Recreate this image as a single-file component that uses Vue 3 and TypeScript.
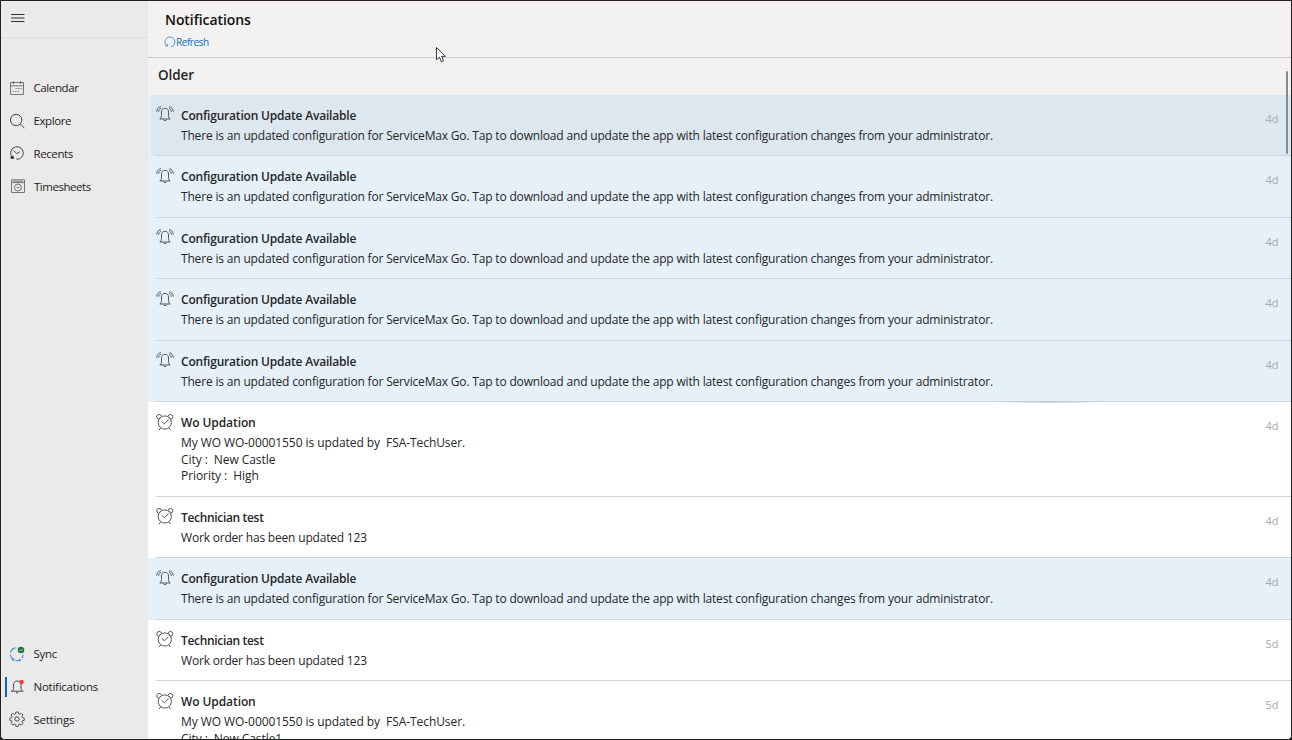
<script setup lang="ts">
interface Note {
  kind: 'bell' | 'alarm'
  variant: 'config' | 'technician' | 'order'
  title: string
  lines: string[]
  age: string
  hovered?: boolean
}

const config = (hovered = false): Note => ({
  kind: 'bell',
  variant: 'config',
  title: 'Configuration Update Available',
  lines: [
    'There is an updated configuration for ServiceMax Go. Tap to download and update the app with latest configuration changes from your administrator.',
  ],
  age: '4d',
  hovered,
})
const technician = (age: string): Note => ({
  kind: 'alarm',
  variant: 'technician',
  title: 'Technician test',
  lines: ['Work order has been updated 123'],
  age,
})
const workOrder = (lines: string[], age: string): Note => ({
  kind: 'alarm',
  variant: 'order',
  title: 'Wo Updation',
  lines: ['My WO WO-00001550 is updated by  FSA-TechUser.', ...lines],
  age,
})

const notes: Note[] = [
  config(true),
  config(),
  config(),
  config(),
  config(),
  workOrder(['City :  New Castle', 'Priority :  High'], '4d'),
  technician('4d'),
  config(),
  technician('5d'),
  workOrder(['City :  New Castle1'], '5d'),
]
</script>

<template>
  <div class="window">
    <aside class="sidebar">
      <div class="menu">
        <svg width="14" height="10" viewBox="0 0 14 10"><path d="M0 1.500h13.500M0 5h13.500M0 8.500h13.500" stroke="#333" stroke-width="1.2" /></svg>
      </div>
      <nav class="top-nav">
        <a class="item">
          <svg class="icon" viewBox="0 0 16 16"><path d="M1.500 2.500h13v12h-13zM1.500 5.800h13M4.500 1v3M11.500 1v3" /><path d="M6.500 8.500h1.300M9 8.500h1.300M11.500 8.500h1.300M3.500 11.500h1.300M6 11.500h1.300M8.700 11.500H10" /></svg>
          <span class="tight">Calendar</span>
        </a>
        <a class="item">
          <svg class="icon dark" viewBox="0 0 16 16"><circle cx="7.200" cy="7" r="5.700" /><path d="M11.400 11.200l4 4" /></svg>
          <span class="tight">Explore</span>
        </a>
        <a class="item">
          <svg class="icon dark" viewBox="0 0 16 16"><path d="M2.200 10.500A6.300 6.300 0 1 1 7.500 14.300M4.400 5.400L7.800 8.600 10.800 6.800" /><path d="M2 11.300h2.300v2.200H2z" fill="#222" /></svg>
          <span class="tight">Recents</span>
        </a>
        <a class="item">
          <svg class="icon shifted" viewBox="0 0 16 16"><path d="M1.500 1.800h13v12.700h-13zM1.500 4.600h13M3 3.200h10" /><circle cx="8" cy="9.500" r="3.500" /><path d="M6.500 9l1.500 1.200 1.700-1.500" /></svg>
          <span class="tightest">Timesheets</span>
        </a>
      </nav>
      <nav class="bottom-nav">
        <a class="item">
          <svg class="icon" viewBox="0 0 16 16">
            <g stroke="#3d8bd0" stroke-width="1.100"><path d="M1.500 6.500A6.500 6.500 0 0 1 7.500 1.800M1.300 8.500a6.500 6.500 0 0 0 3 5M6.500 14.600a6.500 6.500 0 0 0 5-1.200M12.800 12a6.500 6.500 0 0 0 1.400-3.500" /><path d="M3 3.300h1.200M11 12.800v1.800h-1.600M4.800 12.500v1.800H3.200" /></g>
            <circle cx="12" cy="4" r="3.300" fill="#247348" stroke="none" /><path d="M10.600 4l1 1 1.800-1.900" stroke="#d8eee0" stroke-width=".8" />
          </svg>
          <span class="snug">Sync</span>
        </a>
        <a class="item active">
          <svg class="icon dark" viewBox="0 0 16 16"><path d="M2 13.200h12.500M3.200 13.200c1-1 1.300-2 1.300-4V7c0-2.500 1.500-4 3.800-4s3.700 1.500 3.700 4v2.200c0 2 .4 3 1.400 4M7 14.800h2.300" /><circle cx="12.600" cy="4" r="2.200" fill="#ff3d3d" stroke="none" /></svg>
          <span class="snug">Notifications</span>
        </a>
        <a class="item">
          <svg class="icon dark" viewBox="0 0 16 16"><path d="M6.800 1.300h2.400l.5 2 1 .5 1.900-1.100 1.700 1.700-1.100 1.900.4 1 2.100.5v2.400l-2.100.5-.4 1 1.100 1.800-1.700 1.700-1.900-1.100-1 .4-.5 2H6.800l-.5-2-1-.4-1.900 1.100-1.700-1.700 1.100-1.800-.4-1-2-.5V7.800l2-.5.4-1-1.100-1.900 1.700-1.700 1.900 1.100 1-.5z" transform="translate(.5 -.2) scale(.94)" /><circle cx="8" cy="8" r="2.200" /></svg>
          <span class="snug">Settings</span>
        </a>
      </nav>
    </aside>

    <main class="content">
      <header class="header">
        <h1>Notifications</h1>
        <a class="refresh">
          <svg width="12" height="12" viewBox="0 0 12 12"><path d="M3.400 10.300A5 5 0 1 1 7 10.900M1.300 9.900h2.300V7.800" fill="none" stroke="#3a8fd6" stroke-width=".9" /></svg>
          <span>Refresh</span>
        </a>
      </header>
      <h2>Older</h2>
      <ul class="list">
        <li v-for="(note, i) in notes" :key="i" class="note" :class="[note.kind, note.variant, { hovered: note.hovered, ending: i === 4 }]">
          <svg v-if="note.kind === 'bell'" class="note-icon" viewBox="0 0 18 18">
            <path d="M3.600 14h10.800M4.200 14c.9-.9 1.300-2 1.300-3.500V7C5.500 4.800 6.700 3.300 9 3.300s3.500 1.500 3.500 3.700v3.500c0 1.500.4 2.600 1.300 3.500M7.500 14.600c.3 1.400 2.700 1.400 3 0" />
            <path d="M4.800 1.600C2.300 2.300.9 4 .7 6.600M5 3.400C3.500 4 2.800 5 2.600 6.800M13.200 1.600c2.500.7 3.900 2.400 4.100 5M13 3.400c1.500.6 2.200 1.600 2.400 3.400" />
          </svg>
          <svg v-else class="note-icon" viewBox="0 0 18 18">
            <circle cx="8.800" cy="9.500" r="6.600" />
            <path d="M5.600 8.300l2.800 2.500 4.200-4.300M4.600 15l-1.500 2M13 15l1.500 2M2.700 6.200A2.400 2.400 0 1 1 5.500 3.400M14.900 6.200a2.400 2.400 0 1 0-2.800-2.800M3.400 5.400l1.300-1.300M14.200 5.400l-1.300-1.300" />
          </svg>
          <div class="text">
            <h3>{{ note.title }}</h3>
            <p v-for="line in note.lines" :key="line">{{ line }}</p>
          </div>
          <time>{{ note.age }}</time>
        </li>
      </ul>
      <div class="scrollbar"></div>
    </main>

    <svg class="cursor" width="12" height="18" viewBox="0 0 12 18"><path d="M1.500 1.500v12.300l2.900-2.600 2 4.600 2.200-1-2-4.400h3.700z" fill="#fff" stroke="#333747" stroke-width="1" /></svg>
  </div>
</template>

<style>
body {
  margin: 0;
  background: #231f20;
}
</style>

<style scoped>
.window {
  position: relative;
  box-sizing: border-box;
  width: 1292px;
  height: 740px;
  border: 1px solid #231f20;
  border-radius: 0 0 5px 5px;
  display: flex;
  overflow: hidden;
  background: #fff;
  font-family: "Segoe UI", "Open Sans", "Noto Sans", sans-serif;
  color: #262626;
}
h1, h2, h3, p, ul {
  margin: 0;
  padding: 0;
}
.sidebar {
  width: 147px;
  flex: none;
  display: flex;
  flex-direction: column;
  background: #eaeaea;
}
.menu {
  box-sizing: border-box;
  height: 37px;
  padding: 12px 0 0 9.500px;
  border-bottom: 1px solid #dedede;
}
.menu svg {
  display: block;
}
.top-nav {
  padding-top: 33.500px;
}
.bottom-nav {
  margin-top: auto;
  padding-bottom: 3.500px;
}
.item {
  position: relative;
  display: flex;
  align-items: center;
  height: 32.800px;
  padding-left: 8px;
  font-size: 11.500px;
  white-space: nowrap;
  color: #1c1c1c;
}
.item span {
  margin-left: 8.500px;
}
.tight {
  letter-spacing: -0.400px;
}
.tightest {
  letter-spacing: -0.470px;
}
.snug {
  letter-spacing: -0.250px;
}
.item .shifted {
  margin-left: 1px;
}
.item .shifted + span {
  margin-left: 8px;
}
.active::before {
  content: "";
  position: absolute;
  left: 4px;
  top: 7px;
  width: 2px;
  height: 20px;
  background: #0f62b8;
}
.icon {
  width: 16px;
  height: 16px;
  flex: none;
  fill: none;
  stroke: #666;
  stroke-width: 0.900;
}
.icon.dark {
  stroke: #484848;
  stroke-width: 1;
}
.content {
  position: relative;
  flex: 1;
  min-width: 0;
  background: #f3f2f0;
}
.header {
  box-sizing: border-box;
  height: 57px;
  padding: 8px 0 0 17px;
  border-bottom: 1px solid #c8c8c8;
}
h1 {
  font-size: 14px;
  line-height: 21px;
  font-weight: 600;
  letter-spacing: -0.070px;
  color: #111;
}
.refresh {
  display: flex;
  align-items: center;
  height: 16px;
  margin: 3.500px 0 0 -1px;
  font-size: 10px;
  letter-spacing: -0.450px;
  color: #0f6cbd;
}
h2 {
  height: 36.500px;
  padding-left: 10px;
  font-size: 13.500px;
  line-height: 35.500px;
  font-weight: 600;
  letter-spacing: -0.100px;
  color: #262626;
}
.list {
  list-style: none;
}
.note {
  position: relative;
  box-sizing: border-box;
  display: flex;
  min-height: 61.500px;
  padding: 11px 12.500px 12px 8px;
  background: #fff;
}
.note.bell {
  background: #e5f0f9;
}
.note.hovered {
  background: linear-gradient(90deg, #e5f0f9 3px, #dde7f0 3px);
}
.note::after {
  content: "";
  position: absolute;
  left: 8px;
  right: 0;
  bottom: 0;
  height: 1px;
  background: #d0d6da;
}
.note.ending::before {
  content: "";
  position: absolute;
  left: 840px;
  bottom: -1px;
  width: 125px;
  height: 2px;
  background: radial-gradient(closest-side, #b4b7ba, transparent);
  z-index: 1;
}
.note-icon {
  width: 18px;
  height: 18px;
  margin: -0.500px 0 0 -0.300px;
  flex: none;
  fill: none;
  stroke: #50585c;
  stroke-width: 1;
}
.text {
  flex: 1;
  padding-left: 7.300px;
}
h3 {
  font-size: 12px;
  line-height: 20px;
  font-weight: 600;
}
p {
  font-size: 12px;
  line-height: 16.500px;
  white-space: pre;
}
h3 + p {
  padding-top: 2px;
}
.config h3 {
  letter-spacing: -0.200px;
}
.config p {
  letter-spacing: -0.175px;
}
.technician h3 {
  letter-spacing: -0.330px;
}
.technician p {
  letter-spacing: -0.190px;
}
.order h3 {
  letter-spacing: -0.090px;
}
.order p {
  letter-spacing: -0.070px;
}
time {
  padding-top: 4px;
  font-size: 11px;
  line-height: 17px;
  color: #a4a9ac;
}
.scrollbar {
  position: absolute;
  right: 3px;
  top: 70px;
  width: 2px;
  height: 83px;
  border-radius: 1px;
  background: #858a8e;
}
.cursor {
  position: absolute;
  left: 434px;
  top: 45px;
}
</style>
